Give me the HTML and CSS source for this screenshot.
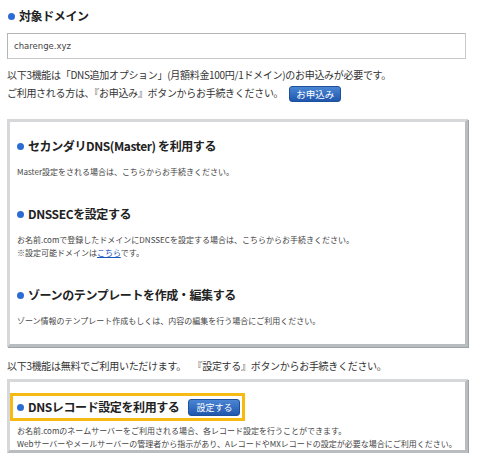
FILE: index.html
```html
<!DOCTYPE html>
<html lang="ja">
<head>
	<meta charset="UTF-8">
	<title>DNS関連機能設定</title>
	<meta name="viewport" content="width=device-width, initial-scale=1">
	<link rel="stylesheet" href="styles.css">
</head>
<body>
	<div class="page">
		<h2 class="title">対象ドメイン</h2>
		<div class="domain">charenge.xyz</div>
		<p class="lead">
			以下3機能は「DNS追加オプション」(月額料金100円/1ドメイン)のお申込みが必要です。<br>
			ご利用される方は、『お申込み』ボタンからお手続きください。<a class="btn btn-apply" href="#">お申込み</a>
		</p>

		<div class="box">
			<section class="item">
				<h3 class="title">セカンダリDNS(Master) を利用する</h3>
				<p class="note">Master設定をされる場合は、こちらからお手続きください。</p>
			</section>
			<section class="item">
				<h3 class="title">DNSSECを設定する</h3>
				<p class="note">
					お名前.comで登録したドメインにDNSSECを設定する場合は、こちらからお手続きください。<br>
					※設定可能ドメインは<a href="#">こちら</a>です。
				</p>
			</section>
			<section class="item">
				<h3 class="title">ゾーンのテンプレートを作成・編集する</h3>
				<p class="note">ゾーン情報のテンプレート作成もしくは、内容の編集を行う場合にご利用ください。</p>
			</section>
		</div>

		<p class="lead free">以下3機能は無料でご利用いただけます。　 『設定する』ボタンからお手続きください。</p>

		<div class="box box-free">
			<div class="highlight">
				<h3 class="title">DNSレコード設定を利用する</h3>
				<a class="btn btn-set" href="#">設定する</a>
			</div>
			<p class="note">
				お名前.comのネームサーバーをご利用される場合、各レコード設定を行うことができます。<br>
				Webサーバーやメールサーバーの管理者から指示があり、AレコードやMXレコードの設定が必要な場合にご利用ください。
			</p>
		</div>
	</div>
</body>
</html>
```

FILE: styles.css
```css
* {
	box-sizing: border-box;
}

body {
	margin: 0;
	font-family: "Noto Sans CJK JP", "Noto Sans", sans-serif;
	color: #333;
	background-color: #fff;
}

.page {
	padding: 6px 12px 0 7px;
}

.title {
	display: flex;
	align-items: center;
	gap: 4px;
	margin: 0;
	font-size: 12px;
	font-weight: bold;
	line-height: 20px;
	letter-spacing: -0.4px;
	white-space: nowrap;
	color: #222;
}

.title::before {
	content: "";
	flex-shrink: 0;
	width: 7px;
	height: 7px;
	border-radius: 50%;
	background-color: #2b6bd3;
}

.page > .title {
	padding-left: 1px;
}

.domain {
	margin: 7px 2px 0 0;
	height: 26px;
	padding: 0 6px;
	border: 1px solid #c9c9c9;
	border-top-color: #b5b5b5;
	border-left-color: #b5b5b5;
	font-family: "DejaVu Sans", sans-serif;
	font-size: 8.5px;
	line-height: 24px;
	color: #444;
}

.lead {
	margin: 7px 0 0;
	font-size: 10px;
	line-height: 18px;
	letter-spacing: -0.3px;
}

.lead.free {
	margin-top: 10px;
}

.btn {
	display: inline-block;
	flex-shrink: 0;
	padding: 0 7px;
	border: 1px solid #1d4f9a;
	border-radius: 3px;
	background: linear-gradient(#4a86d4, #2057ae);
	color: #fff;
	font-size: 9.5px;
	line-height: 14px;
	letter-spacing: 0;
	text-decoration: none;
	vertical-align: middle;
}

.btn-apply {
	margin-left: 6px;
	padding: 0 6px;
}

.box {
	margin-top: 17px;
	padding: 14px 7px 17px;
	border: 3px solid #d6d8da;
	border-right-color: #b9bdc0;
	border-bottom-color: #b9bdc0;
	box-shadow: 1px 1px 0 #9ea3a7;
}

.item + .item {
	margin-top: 26px;
}

.note {
	margin: 9px 0 0;
	font-size: 8px;
	line-height: 13px;
	color: #444;
}

.note a {
	color: #1a55c4;
}

.box-free {
	margin-top: 4px;
	padding: 11px 7px 0 0;
}

.highlight {
	display: flex;
	align-items: center;
	gap: 9px;
	width: 235px;
	height: 28px;
	padding-left: 4px;
	border: 3px solid #f6ba12;
}

.btn-set {
	padding: 0 7px;
	font-size: 9px;
	line-height: 15px;
}

.box-free .note {
	margin: 3px 0 0 7px;
}
```
